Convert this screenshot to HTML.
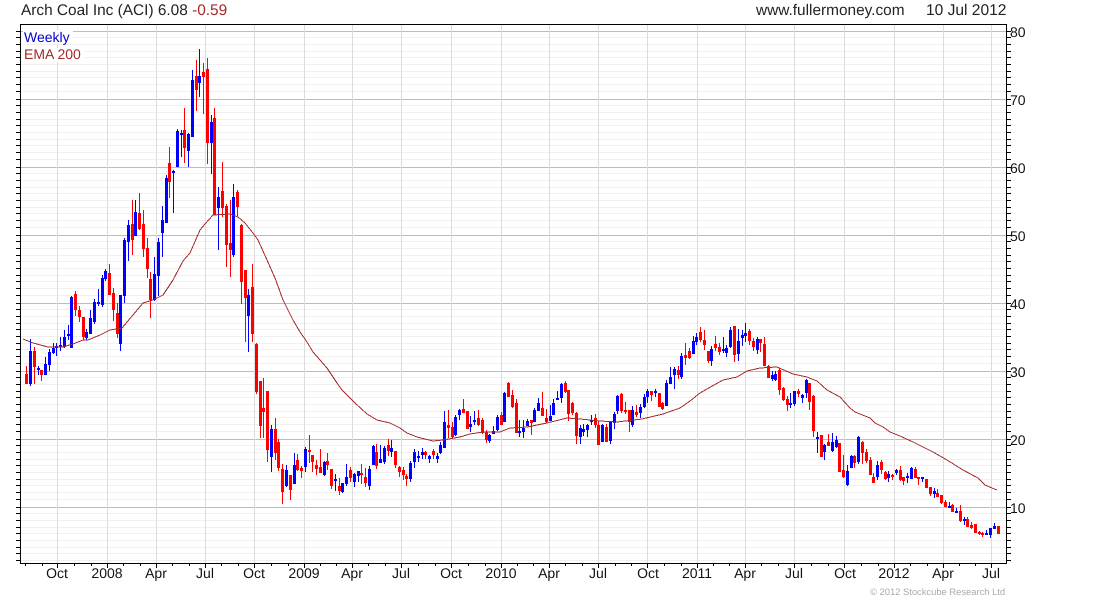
<!DOCTYPE html>
<html><head><meta charset="utf-8"><title>Arch Coal Inc (ACI)</title>
<style>
html,body{margin:0;padding:0;background:#fff;width:1100px;height:600px;overflow:hidden}
svg{display:block}
text{font-family:"Liberation Sans",Arial,sans-serif;text-rendering:geometricPrecision}
.t{font-size:15.4px;fill:#222}
.a{font-size:14px;fill:#111}
.m{text-anchor:middle}
</style></head><body>
<svg width="1100" height="600" viewBox="0 0 1100 600" xmlns="http://www.w3.org/2000/svg">
<defs>
<pattern id="g" patternUnits="userSpaceOnUse" x="0" y="31" width="8" height="68">
<path d="M0 .5H8" stroke="#bdbdbd" stroke-width="1"/>
<path d="M0 6.5H8M0 13.5H8M0 20.5H8M0 26.5H8M0 33.5H8M0 40.5H8M0 46.5H8M0 53.5H8M0 60.5H8" stroke="#f0f0f0" stroke-width="1"/>
</pattern>
<pattern id="k" patternUnits="userSpaceOnUse" x="0" y="31" width="4" height="68">
<path d="M0 .5H4M0 6.5H4M0 13.5H4M0 20.5H4M0 26.5H4M0 33.5H4M0 40.5H4M0 46.5H4M0 53.5H4M0 60.5H4" stroke="#000" stroke-width="1"/>
</pattern>
</defs>
<rect x="21" y="25" width="985" height="538" fill="url(#g)"/>
<path shape-rendering="crispEdges" stroke="#dcdcdc" stroke-width="1" fill="none" d="M57.5 25V563M107.5 25V563M156.5 25V563M205.5 25V563M254.5 25V563M304.5 25V563M352.5 25V563M401.5 25V563M451.5 25V563M501.5 25V563M549.5 25V563M598.5 25V563M647.5 25V563M697.5 25V563M745.5 25V563M794.5 25V563M844.5 25V563M894.5 25V563M943.5 25V563M991.5 25V563"/>
<rect x="16" y="28" width="4" height="534" fill="url(#k)"/>
<rect x="1007" y="28" width="4" height="534" fill="url(#k)"/>
<path shape-rendering="crispEdges" stroke="#000" stroke-width="1" fill="none" d="M20.5 24.5H1006.5V563.5H20.5Z"/>
<path shape-rendering="crispEdges" stroke="#000" stroke-width="1" fill="none" d="M57.5 564V568M107.5 564V568M156.5 564V568M205.5 564V568M254.5 564V568M304.5 564V568M352.5 564V568M401.5 564V568M451.5 564V568M501.5 564V568M549.5 564V568M598.5 564V568M647.5 564V568M697.5 564V568M745.5 564V568M794.5 564V568M844.5 564V568M894.5 564V568M943.5 564V568M991.5 564V568"/>
<path shape-rendering="crispEdges" stroke="#000" stroke-width="1" fill="none" d="M25.5 564V566M42.5 564V566M74.5 564V566M91.5 564V566M123.5 564V566M140.5 564V566M172.5 564V566M189.5 564V566M221.5 564V566M238.5 564V566M271.5 564V566M288.5 564V566M320.5 564V566M336.5 564V566M368.5 564V566M385.5 564V566M418.5 564V566M435.5 564V566M468.5 564V566M485.5 564V566M517.5 564V566M533.5 564V566M565.5 564V566M582.5 564V566M615.5 564V566M631.5 564V566M664.5 564V566M681.5 564V566M713.5 564V566M729.5 564V566M761.5 564V566M778.5 564V566M811.5 564V566M828.5 564V566M861.5 564V566M878.5 564V566M910.5 564V566M927.5 564V566M959.5 564V566M975.5 564V566"/>

<!-- red wicks -->
<path shape-rendering="crispEdges" stroke="#ff0000" stroke-width="1" fill="none" d="M26.5 366V384M34.5 347V384M41.5 370V381M75.5 291V316M79.5 306V322M83.5 317V340M109.5 264V295M113.5 288V321M117.5 303V338M132.5 200V255M139.5 193V230M143.5 210V257M147.5 238V278M150.5 272V318M169.5 147V198M184.5 108V163M196.5 60V111M203.5 63V114M207.5 58V164M214.5 108V215M222.5 162V217M226.5 204V267M230.5 200V277M237.5 190V216M241.5 224V304M245.5 270V342M252.5 264V342M256.5 343V394M260.5 381V438M263.5 378V438M267.5 391V462M275.5 418V460M278.5 439V471M282.5 464V504M290.5 475V500M297.5 454V471M301.5 466V478M309.5 435V463M312.5 455V472M316.5 460V475M320.5 449V473M327.5 453V470M331.5 469V489M339.5 478V495M350.5 467V482M361.5 464V484M365.5 468V487M376.5 444V469M388.5 439V456M395.5 451V468M399.5 466V477M403.5 467V480M406.5 474V486M425.5 451V459M433.5 449V459M448.5 410V438M452.5 422V438M463.5 399V413M467.5 411V429M478.5 410V426M482.5 418V434M486.5 430V443M501.5 412V425M508.5 382V397M512.5 390V408M516.5 399V433M531.5 420V435M542.5 392V416M546.5 409V423M565.5 381V393M568.5 390V421M572.5 402V415M576.5 412V444M595.5 414V428M598.5 421V445M606.5 424V442M621.5 393V413M625.5 402V414M629.5 410V432M636.5 405V417M651.5 391V401M659.5 393V407M662.5 402V410M678.5 366V379M685.5 343V365M689.5 348V359M700.5 327V342M704.5 330V350M708.5 351V363M715.5 336V351M719.5 343V355M734.5 326V362M749.5 329V345M753.5 338V351M760.5 339V352M764.5 337V366M768.5 365V378M779.5 368V395M783.5 387V401M787.5 396V411M798.5 389V397M809.5 383V410M813.5 395V437M821.5 435V457M828.5 434V446M839.5 443V472M843.5 455V478M854.5 455V468M862.5 441V464M866.5 449V463M870.5 457V475M873.5 473V483M881.5 460V474M885.5 471V480M892.5 474V480M900.5 466V481M903.5 477V485M915.5 467V478M918.5 477V485M926.5 479V488M930.5 487V496M937.5 489V497M941.5 495V504M945.5 500V507M952.5 504V512M960.5 505V522M967.5 517V527M971.5 522V529M975.5 524V533M979.5 531V535M982.5 532V537M998.5 526V534"/>
<!-- red bodies -->
<path shape-rendering="crispEdges" stroke="#ff0000" stroke-width="3" fill="none" d="M26.5 374V384M34.5 351V367M41.5 370V375M75.5 294V310M79.5 310V317M83.5 317V337M109.5 273V295M113.5 293V310M117.5 313V334M132.5 224V240M139.5 213V229M143.5 224V249M147.5 248V269M150.5 279V300M169.5 163V182M184.5 130V148M196.5 76V90M203.5 72V77M207.5 69V143M214.5 118V215M222.5 191V208M226.5 206V245M230.5 243V250M237.5 192V207M241.5 225V282M245.5 270V298M252.5 287V334M256.5 344V392M260.5 381V426M263.5 408V412M267.5 391V450M275.5 429V453M278.5 442V468M282.5 469V492M290.5 475V490M297.5 460V470M301.5 468V471M309.5 450V452M312.5 455V462M316.5 465V469M320.5 467V473M327.5 461V465M331.5 469V486M339.5 486V491M350.5 470V478M361.5 473V475M365.5 477V483M376.5 452V466M388.5 445V451M395.5 451V465M399.5 467V472M403.5 470V475M406.5 476V479M425.5 452V455M433.5 451V455M448.5 425V428M452.5 427V437M463.5 409V413M467.5 411V429M478.5 418V425M482.5 420V433M486.5 432V440M501.5 415V425M508.5 383V397M512.5 395V407M516.5 403V433M531.5 420V423M542.5 408V416M546.5 418V422M565.5 383V392M568.5 390V414M572.5 403V413M576.5 413V436M595.5 418V425M598.5 425V445M606.5 427V442M621.5 394V411M625.5 410V412M629.5 410V422M636.5 412V415M651.5 391V395M659.5 393V407M662.5 403V409M678.5 370V375M685.5 355V358M689.5 351V358M700.5 332V340M704.5 340V345M708.5 351V361M715.5 344V348M719.5 347V352M734.5 326V355M749.5 331V341M753.5 341V347M760.5 339V343M764.5 344V366M768.5 366V378M779.5 370V390M783.5 388V400M787.5 399V405M798.5 391V394M809.5 383V402M813.5 396V431M821.5 435V457M828.5 442V446M839.5 443V472M843.5 470V477M854.5 456V463M862.5 442V453M866.5 452V461M870.5 460V475M873.5 477V483M881.5 462V470M885.5 472V479M892.5 475V477M900.5 470V480M903.5 477V481M915.5 469V478M918.5 477V479M926.5 479V488M930.5 487V494M937.5 493V497M941.5 495V503M945.5 502V507M952.5 505V512M960.5 511V521M967.5 519V527M971.5 525V528M975.5 524V533M979.5 532V534M982.5 533V535M998.5 526V534"/>
<!-- blue wicks -->
<path shape-rendering="crispEdges" stroke="#0000ff" stroke-width="1" fill="none" d="M30.5 339V386M38.5 366V375M45.5 357V375M49.5 349V371M53.5 343V354M56.5 343V356M60.5 337V351M64.5 330V348M68.5 325V340M71.5 296V348M86.5 329V340M90.5 310V334M94.5 299V324M98.5 289V306M102.5 275V307M105.5 269V281M120.5 295V351M124.5 238V303M128.5 220V261M135.5 200V236M154.5 257V301M158.5 238V296M162.5 206V257M166.5 175V223M173.5 170V213M177.5 129V167M181.5 130V157M188.5 133V167M192.5 70V137M199.5 49V97M211.5 115V174M218.5 187V250M233.5 184V257M248.5 289V352M271.5 425V472M286.5 465V487M294.5 453V484M305.5 447V472M324.5 461V476M335.5 474V491M342.5 483V493M346.5 464V486M354.5 473V487M358.5 471V482M369.5 466V490M373.5 445V465M380.5 445V463M384.5 446V464M391.5 440V457M410.5 461V482M414.5 449V468M418.5 451V462M422.5 448V459M429.5 455V463M437.5 453V463M440.5 442V454M444.5 411V448M455.5 415V436M459.5 409V420M470.5 416V432M474.5 411V425M489.5 434V443M493.5 426V434M497.5 415V431M504.5 392V422M519.5 420V437M523.5 420V438M527.5 419V426M534.5 408V422M538.5 398V411M550.5 405V421M553.5 399V415M557.5 391V400M561.5 383V403M580.5 425V444M583.5 424V436M587.5 424V437M591.5 415V425M602.5 424V442M610.5 421V444M614.5 412V429M617.5 395V414M632.5 406V427M640.5 404V418M644.5 394V408M647.5 389V403M655.5 389V397M666.5 380V406M670.5 367V384M674.5 367V389M681.5 353V379M693.5 336V354M696.5 333V345M711.5 346V366M723.5 337V353M726.5 345V357M730.5 327V348M738.5 329V361M742.5 330V346M745.5 323V342M757.5 337V354M772.5 371V381M775.5 371V381M790.5 393V408M794.5 391V406M802.5 394V403M806.5 379V398M817.5 432V453M824.5 444V460M832.5 433V452M836.5 436V448M847.5 465V486M851.5 455V468M858.5 436V464M877.5 461V480M888.5 471V482M896.5 469V475M907.5 473V483M911.5 467V479M922.5 477V482M934.5 488V498M949.5 502V508M956.5 508V513M964.5 517V525M986.5 530V535M990.5 528V538M994.5 523V529"/>
<!-- blue bodies -->
<path shape-rendering="crispEdges" stroke="#0000ff" stroke-width="3" fill="none" d="M30.5 351V384M38.5 368V370M45.5 364V375M49.5 352V365M53.5 348V353M56.5 346V348M60.5 345V347M64.5 337V347M68.5 334V336M71.5 297V348M86.5 332V338M90.5 318V334M94.5 302V322M98.5 302V304M102.5 278V305M105.5 271V279M120.5 295V344M124.5 240V296M128.5 225V242M135.5 212V236M154.5 274V300M158.5 242V276M162.5 220V233M166.5 178V223M173.5 171V173M177.5 131V167M181.5 133V135M188.5 134V151M192.5 80V137M199.5 76V83M211.5 122V143M218.5 197V208M233.5 197V255M248.5 295V316M271.5 429V457M286.5 470V486M294.5 465V484M305.5 449V467M324.5 462V475M335.5 479V481M342.5 483V492M346.5 477V484M354.5 474V482M358.5 471V476M369.5 469V486M373.5 446V465M380.5 459V463M384.5 448V462M391.5 448V452M410.5 463V479M414.5 452V462M418.5 456V458M422.5 452V455M429.5 456V459M437.5 456V459M440.5 445V453M444.5 422V448M455.5 417V435M459.5 410V415M470.5 424V427M474.5 420V422M489.5 435V441M493.5 431V434M497.5 417V430M504.5 393V422M519.5 431V433M523.5 428V432M527.5 421V426M534.5 410V422M538.5 403V411M550.5 416V421M553.5 403V415M557.5 398V400M561.5 384V398M580.5 428V437M583.5 429V432M587.5 425V430M591.5 420V422M602.5 425V442M610.5 422V441M614.5 414V423M617.5 396V411M632.5 410V425M640.5 407V413M644.5 397V407M647.5 391V397M655.5 391V393M666.5 383V406M670.5 377V384M674.5 369V375M681.5 356V377M693.5 341V354M696.5 337V342M711.5 349V361M723.5 349V351M726.5 348V353M730.5 330V347M738.5 341V354M742.5 335V338M745.5 333V336M757.5 339V350M772.5 375V379M775.5 374V380M790.5 403V405M794.5 391V404M802.5 395V398M806.5 380V393M817.5 437V439M824.5 445V452M832.5 442V451M836.5 440V447M847.5 471V485M851.5 456V468M858.5 437V462M877.5 465V477M888.5 474V478M896.5 470V473M907.5 476V478M911.5 468V479M922.5 477V479M934.5 491V494M949.5 506V508M956.5 511V513M964.5 519V521M986.5 533V535M990.5 528V535M994.5 526V529"/>
<!-- EMA -->
<polyline fill="none" stroke="#a52a2a" stroke-width="1" shape-rendering="crispEdges" points="23,339 33,343 48,347 63,347 73,344 83,340 88,340 100,335 110,330 122,328 133,315 143,303 153,300 163,295 173,280 183,261 190,253 200,230 205,224 213,215 230,214 238,217 245,223 253,233 258,240 267,260 275,278 283,300 293,320 300,332 307,342 313,352 327,368 337,383 342,390 355,403 367,414 377,420 390,423 400,428 407,433 417,437 433,441 443,440 460,437 470,434 483,432 500,432 510,428 527,427 547,423 567,418 580,419 600,421 617,422 642,419 663,414 680,408 690,401 700,393 707,389 723,380 737,377 747,371 760,368 777,367 793,374 807,377 817,381 827,390 840,397 850,408 855,412 870,418 875,423 883,427 890,432 900,436 913,442 933,452 947,460 963,470 978,478 985,485 992,488 997,490"/>

<!-- legend -->
<rect x="23" y="30" width="50" height="14" fill="#fff"/>
<rect x="23" y="48" width="61" height="14" fill="#fff"/>
<text x="24" y="42" font-size="14" fill="#0000cc">Weekly</text>
<text x="24" y="59" font-size="14" fill="#a52a2a">EMA 200</text>

<!-- header -->
<text class="t" x="21" y="15">Arch Coal Inc (ACI) 6.08 <tspan fill="#a52a2a">-0.59</tspan></text>
<text class="t" x="756" y="15">www.fullermoney.com</text>
<text class="t" x="926" y="15" style="font-size:15.55px">10 Jul 2012</text>

<!-- y labels -->
<text class="a" x="1010" y="37">80</text>
<text class="a" x="1010" y="105">70</text>
<text class="a" x="1010" y="173">60</text>
<text class="a" x="1010" y="241">50</text>
<text class="a" x="1010" y="309">40</text>
<text class="a" x="1010" y="377">30</text>
<text class="a" x="1010" y="445">20</text>
<text class="a" x="1010" y="513">10</text>
<!-- x labels -->
<text class="a m" x="57" y="578">Oct</text>
<text class="a m" x="107" y="578">2008</text>
<text class="a m" x="156" y="578">Apr</text>
<text class="a m" x="205" y="578">Jul</text>
<text class="a m" x="254" y="578">Oct</text>
<text class="a m" x="304" y="578">2009</text>
<text class="a m" x="352" y="578">Apr</text>
<text class="a m" x="401" y="578">Jul</text>
<text class="a m" x="451" y="578">Oct</text>
<text class="a m" x="501" y="578">2010</text>
<text class="a m" x="549" y="578">Apr</text>
<text class="a m" x="598" y="578">Jul</text>
<text class="a m" x="648" y="578">Oct</text>
<text class="a m" x="697" y="578">2011</text>
<text class="a m" x="745" y="578">Apr</text>
<text class="a m" x="794" y="578">Jul</text>
<text class="a m" x="845" y="578">Oct</text>
<text class="a m" x="894" y="578">2012</text>
<text class="a m" x="943" y="578">Apr</text>
<text class="a m" x="991" y="578">Jul</text>

<text x="870" y="595" font-size="9.4" fill="#aaaaaa">© 2012 Stockcube Research Ltd</text>
</svg>
</body></html>
